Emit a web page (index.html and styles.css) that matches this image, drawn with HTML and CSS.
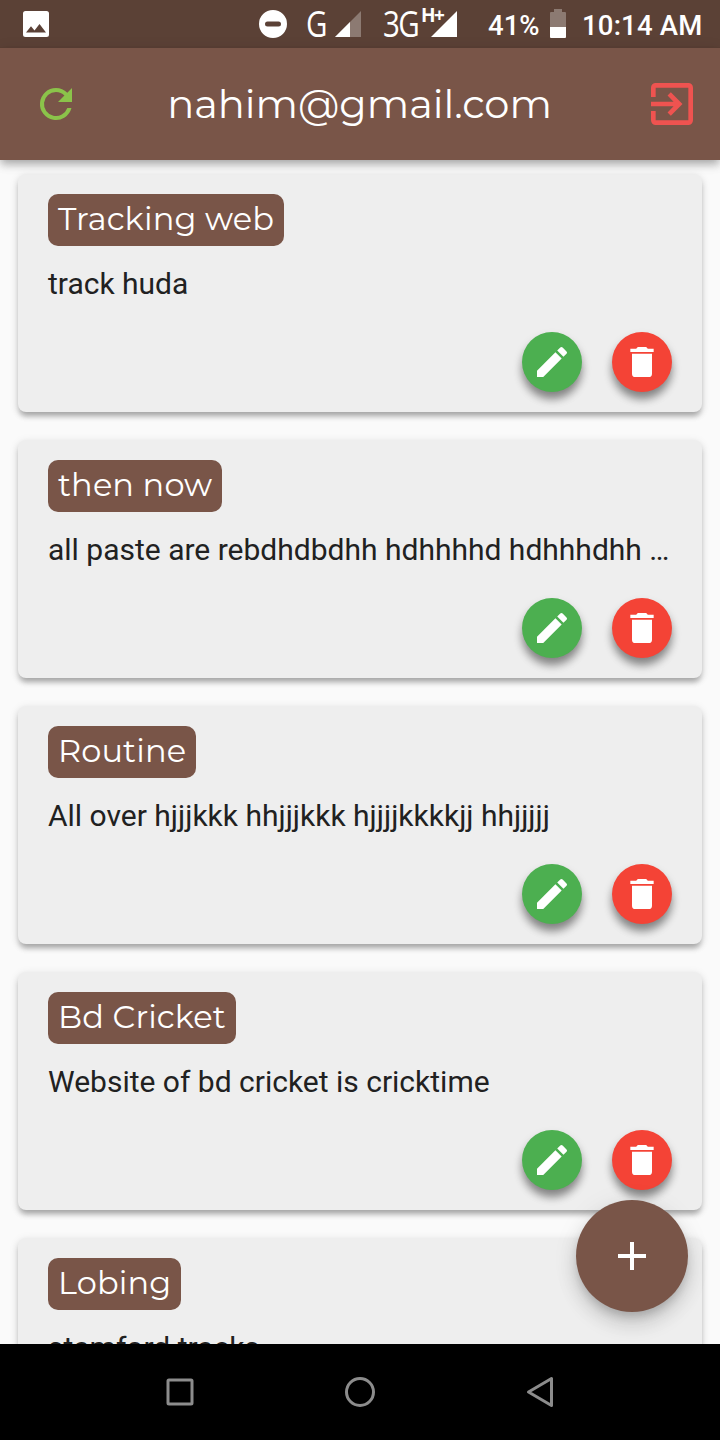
FILE: index.html
```html
<!DOCTYPE html>
<html lang="en">
<head>
<meta charset="utf-8">
<title>Notes</title>
<link rel="stylesheet" href="styles.css">
</head>
<body>
<svg width="0" height="0" class="defs" aria-hidden="true">
  <symbol id="pencil" viewBox="0 0 24 24"><path d="M3 17.250V21h3.750L17.810 9.940l-3.750-3.750L3 17.250zM20.710 7.040a1 1 0 0 0 0-1.410l-2.340-2.340a1 1 0 0 0-1.410 0l-1.830 1.830 3.750 3.750 1.830-1.830z"/></symbol>
  <symbol id="trash" viewBox="0 0 24 24"><path d="M6 19a2 2 0 0 0 2 2h8a2 2 0 0 0 2-2V7H6v12zM19 4h-3.500l-1-1h-5l-1 1H5v2h14V4z"/></symbol>
</svg>
<div class="screen">
  <header class="status">
    <svg class="picture" width="26" height="26" viewBox="0 0 26 26"><path fill-rule="evenodd" d="M2.500 0h21A2.500 2.500 0 0 1 26 2.500v21a2.500 2.500 0 0 1-2.500 2.500h-21A2.500 2.500 0 0 1 0 23.500v-21A2.500 2.500 0 0 1 2.500 0zM3 21.500h20L16.500 13l-5 6.400L8 15.200z"/></svg>
    <svg class="dnd" width="28" height="28" viewBox="0 0 28 28"><path fill-rule="evenodd" d="M14 0a14 14 0 1 1 0 28a14 14 0 0 1 0-28zM8.500 11.500a2.500 2.500 0 0 0 0 5h11a2.500 2.500 0 0 0 0-5z"/></svg>
    <span class="net net-g">G</span>
    <svg class="signal" width="26" height="26" viewBox="0 0 26 26"><path opacity=".3" d="M0 26L26 0v26z"/><path d="M0 26L15 11v15z"/></svg>
    <span class="net net-3g">3G</span>
    <span class="plus">H+</span>
    <svg class="signal signal-full" width="26" height="26" viewBox="0 0 26 26"><path d="M0 26L26 0v26z"/></svg>
    <span class="percent">41%</span>
    <svg class="battery" width="16" height="29" viewBox="0 0 16 29"><path opacity=".3" d="M4 0h8v3h3a1 1 0 0 1 1 1v14H0V4a1 1 0 0 1 1-1h3z"/><path d="M0 18h16v10a1 1 0 0 1-1 1H1a1 1 0 0 1-1-1z"/></svg>
    <span class="clock">10:14 AM</span>
  </header>
  <div class="appbar">
    <svg class="refresh" width="48" height="48" viewBox="0 0 24 24"><path d="M17.650 6.350A7.960 7.960 0 0 0 12 4a8 8 0 1 0 7.730 10h-2.080A6 6 0 1 1 12 6c1.660 0 3.140.69 4.220 1.780L13 11h7V4z"/></svg>
    <h1 class="title">nahim@gmail.com</h1>
    <svg class="exit" width="56" height="56" viewBox="0 0 24 24"><path d="M10.090 15.590L11.500 17l5-5-5-5-1.410 1.410L12.670 11H3v2h9.670l-2.580 2.590zM19 3H5a2 2 0 0 0-2 2v4h2V5h14v14H5v-4H3v4a2 2 0 0 0 2 2h14a2 2 0 0 0 2-2V5a2 2 0 0 0-2-2z"/></svg>
  </div>
  <main class="list">
    <article class="card">
      <h2 class="tag">Tracking web</h2>
      <p class="note">track huda</p>
      <div class="actions"><button class="round edit"><svg width="40" height="40"><use href="#pencil"/></svg></button><button class="round delete"><svg width="40" height="40"><use href="#trash"/></svg></button></div>
    </article>
    <article class="card">
      <h2 class="tag">then now</h2>
      <p class="note">all paste are rebdhdbdhh hdhhhhd hdhhhdhh …</p>
      <div class="actions"><button class="round edit"><svg width="40" height="40"><use href="#pencil"/></svg></button><button class="round delete"><svg width="40" height="40"><use href="#trash"/></svg></button></div>
    </article>
    <article class="card">
      <h2 class="tag">Routine</h2>
      <p class="note">All over hjjjkkk hhjjjkkk hjjjjkkkkjj hhjjjjj</p>
      <div class="actions"><button class="round edit"><svg width="40" height="40"><use href="#pencil"/></svg></button><button class="round delete"><svg width="40" height="40"><use href="#trash"/></svg></button></div>
    </article>
    <article class="card">
      <h2 class="tag">Bd Cricket</h2>
      <p class="note">Website of bd cricket is cricktime</p>
      <div class="actions"><button class="round edit"><svg width="40" height="40"><use href="#pencil"/></svg></button><button class="round delete"><svg width="40" height="40"><use href="#trash"/></svg></button></div>
    </article>
    <article class="card">
      <h2 class="tag">Lobing</h2>
      <p class="note">stamford tracks</p>
    </article>
    <button class="fab"><svg width="48" height="48" viewBox="0 0 24 24"><path d="M19 13h-6v6h-2v-6H5v-2h6V5h2v6h6v2z"/></svg></button>
  </main>
  <nav class="nav">
    <svg width="48" height="48" viewBox="0 0 48 48"><rect x="12" y="12" width="24" height="24" rx="1"/></svg>
    <svg width="48" height="48" viewBox="0 0 48 48"><circle cx="24" cy="24" r="13.500"/></svg>
    <svg width="48" height="48" viewBox="0 0 48 48"><path d="M35.500 10.500v27L12.500 24z"/></svg>
  </nav>
</div>
</body>
</html>
```
FILE: styles.css
```css
* { box-sizing: border-box; }
body { margin: 0; font-family: Roboto, sans-serif; }
.defs { position: absolute; }
svg { display: block; flex: none; fill: currentColor; }
h1, h2, p { margin: 0; font-weight: 400; white-space: nowrap; }
button { border: 0; padding: 0; color: #fff; }
.screen { display: flex; flex-direction: column; width: 720px; height: 1440px; overflow: hidden; background: #fafafa; }

.status { display: flex; align-items: center; height: 48px; flex: none; padding-left: 23px; background: #5b4136; color: #fff; }
.dnd { margin-left: 210px; }
.net { font: 36px/48px "Open Sans", sans-serif; transform: scaleX(.82); transform-origin: left; white-space: nowrap; }
.net-g { width: 29px; margin-left: 19px; }
.net-3g { width: 38px; margin-left: 22px; letter-spacing: -2px; }
.plus { width: 23px; font: 700 19px/18px "Open Sans", sans-serif; margin-bottom: 18px; letter-spacing: -1.500px; }
.signal-full { margin-left: -13px; }
.percent { width: 62px; margin-left: 31px; font: 500 27.500px/48px Roboto, sans-serif; padding-top: 4px; }
.battery { width: 16px; margin-bottom: 1px; }
.clock { margin-left: 16px; font: 500 27.500px/48px Roboto, sans-serif; padding-top: 4px; letter-spacing: .2px; white-space: nowrap; }

.appbar { position: relative; z-index: 1; display: flex; align-items: center; flex: none; height: 112px; padding: 0 20px 0 32px; background: #795548; box-shadow: 0 4px 8px -2px rgba(0,0,0,.2), 0 6px 8px rgba(0,0,0,.12), 0 2px 14px rgba(0,0,0,.1); }
.refresh { color: #8bc34a; }
.exit { color: #ef5350; }
.title { flex: 1; margin-right: 5px; text-align: center; color: #fff; font: 400 40px/56px Montserrat, Inter, sans-serif; }

.list { position: relative; display: flex; flex-direction: column; gap: 28px; flex: 1; min-height: 0; overflow: hidden; padding: 14px 18px 0; }
.card { display: flex; flex-direction: column; align-items: flex-start; flex: none; height: 238px; padding: 20px 30px; border-radius: 8px; background: #eee; box-shadow: 0 6px 5px -2px rgba(0,0,0,.18), 0 4px 6px rgba(0,0,0,.13), 0 2px 10px rgba(0,0,0,.1); }
.tag { height: 52px; padding: 0 10px; border-radius: 10px; background: #795548; color: #fff; font: 400 32px/50px Montserrat, Inter, sans-serif; letter-spacing: .13px; }
.note { margin-top: 20px; color: #212121; font-size: 30px; line-height: 36px; }
.actions { display: flex; gap: 30px; margin-top: auto; margin-left: auto; }
.round { display: grid; place-items: center; width: 60px; height: 60px; border-radius: 50%; box-shadow: 0 8px 9px -1px rgba(0,0,0,.28), 0 6px 10px rgba(0,0,0,.25); }
.edit { background: #4caf50; }
.delete { background: #f44336; }
.fab { position: absolute; right: 32px; bottom: 32px; display: grid; place-items: center; width: 112px; height: 112px; border-radius: 50%; background: #795548; box-shadow: 0 6px 10px -2px rgba(0,0,0,.17), 0 12px 20px rgba(0,0,0,.14), 0 4px 28px rgba(0,0,0,.07); }

.nav { display: flex; justify-content: space-between; align-items: center; flex: none; height: 96px; padding: 0 156px; background: #000; }
.nav svg { fill: none; stroke: #8c8c8c; stroke-width: 3; stroke-linejoin: round; }
```
